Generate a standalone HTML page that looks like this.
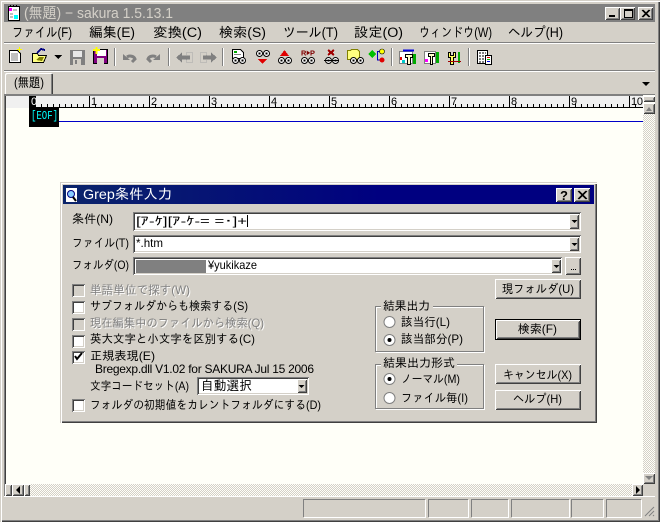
<!DOCTYPE html>
<html lang="ja"><head><meta charset="utf-8"><title>sakura</title>
<style>
html,body{margin:0;padding:0;background:#d4d0c8}
#w{position:relative;width:660px;height:522px;overflow:hidden;background:#d4d0c8}
#w div{position:absolute;box-sizing:border-box}
.rs{background:#d4d0c8;box-shadow:inset 1px 1px 0 #fff,inset -1px -1px 0 #404040,inset 2px 2px 0 #d4d0c8,inset -2px -2px 0 #808080}
.sk{background:#fff;box-shadow:inset 1px 1px 0 #808080,inset -1px -1px 0 #fff,inset 2px 2px 0 #404040,inset -2px -2px 0 #d4d0c8}
.ck{width:13px;height:13px}
.dis{background:#d4d0c8}
.grp{border:1px solid #808080;box-shadow:1px 1px 0 #fff,inset 1px 1px 0 #fff}
.st{box-shadow:inset 1px 1px 0 #808080,1px 1px 0 #fff}
.dith{background-image:conic-gradient(#d4d0c8 25%,#fffff8 0 50%,#d4d0c8 0 75%,#fffff8 0);background-size:2px 2px}
svg{position:absolute;left:0;top:0}
text{font-family:"Liberation Sans","IPAGothic","Noto Sans CJK JP",sans-serif;font-size:12px;fill:#000;white-space:pre}
.m{font-size:13.500px}
.dot{background-image:conic-gradient(#d4d0c8 25%,#fff 0 50%,#d4d0c8 0 75%,#fff 0);background-size:2px 2px}
</style></head><body><div id="w">
<!-- window frame -->
<div style="left:0;top:0;width:660px;height:522px;box-shadow:inset 1px 1px 0 #d4d0c8,inset 2px 2px 0 #fff,inset -1px -1px 0 #404040,inset -2px -2px 0 #808080"></div>
<div style="left:4px;top:4px;width:651px;height:18px;background:#808080"></div>
<div class="rs" style="left:605px;top:7px;width:15px;height:13px"></div>
<div class="rs" style="left:620px;top:7px;width:15px;height:13px"></div>
<div class="rs" style="left:638px;top:7px;width:15px;height:13px"></div>
<div style="left:4px;top:42px;width:651px;height:1px;background:#808080;box-shadow:0 1px 0 #fff"></div>
<div style="left:4px;top:70px;width:651px;height:1px;background:#808080;box-shadow:0 1px 0 #fff"></div>
<!-- separators -->
<div style="left:114px;top:48px;width:1px;height:18px;background:#808080;box-shadow:1px 0 0 #fff"></div>
<div style="left:168px;top:48px;width:1px;height:18px;background:#808080;box-shadow:1px 0 0 #fff"></div>
<div style="left:222px;top:48px;width:1px;height:18px;background:#808080;box-shadow:1px 0 0 #fff"></div>
<div style="left:391px;top:48px;width:1px;height:18px;background:#808080;box-shadow:1px 0 0 #fff"></div>
<div style="left:468px;top:48px;width:1px;height:18px;background:#808080;box-shadow:1px 0 0 #fff"></div>
<!-- tab -->
<div style="left:5px;top:73px;width:48px;height:22px;background:#d4d0c8;box-shadow:inset 1px 1px 0 #fff,inset -1px 0 0 #404040,inset -2px 0 0 #808080;border-radius:2px 2px 0 0"></div>
<!-- editor -->
<div style="left:4px;top:94px;width:651px;height:403px;background:#fffff8;box-shadow:inset 1px 1px 0 #808080,inset 2px 0 0 #404040,inset 0 -1px 0 #fff"></div>
<div style="left:5px;top:95px;width:638px;height:1px;background:#808080"></div>
<div style="left:6px;top:96px;width:637px;height:12px;background:#f0f0f0"></div>
<div style="left:29px;top:107px;width:614px;height:1px;background:#000"></div>
<div style="left:29px;top:121px;width:614px;height:1px;background:#0000c8"></div>
<div style="left:29px;top:108px;width:30px;height:19px;background:#000"></div>
<div style="left:30px;top:96px;width:6px;height:11px;background:#000"></div>
<!-- scrollbars -->
<div class="dith" style="left:643px;top:114px;width:12px;height:359px"></div>
<div class="rs" style="left:643px;top:96px;width:12px;height:6px"></div>
<div class="rs" style="left:643px;top:103px;width:12px;height:11px"></div>
<div class="rs" style="left:643px;top:473px;width:12px;height:11px"></div>
<div style="left:643px;top:484px;width:12px;height:12px;background:#d4d0c8"></div>
<div class="dith" style="left:30px;top:484px;width:602px;height:12px"></div>
<div class="rs" style="left:5px;top:484px;width:7px;height:12px"></div>
<div class="rs" style="left:12px;top:484px;width:12px;height:12px"></div>
<div class="rs" style="left:24px;top:484px;width:6px;height:12px"></div>
<div class="rs" style="left:632px;top:484px;width:11px;height:12px"></div>
<!-- status -->
<div style="left:4px;top:496px;width:651px;height:1px;background:#fff"></div>
<div class="st" style="left:303px;top:499px;width:122px;height:18px"></div>
<div class="st" style="left:428px;top:499px;width:40px;height:18px"></div>
<div class="st" style="left:471px;top:499px;width:37px;height:18px"></div>
<div class="st" style="left:511px;top:499px;width:58px;height:18px"></div>
<div class="st" style="left:571px;top:499px;width:32px;height:18px"></div>
<div class="st" style="left:606px;top:499px;width:35px;height:18px"></div>
<!-- dialog -->
<div style="left:60px;top:182px;width:537px;height:241px;background:#d4d0c8;box-shadow:inset 1px 1px 0 #d4d0c8,inset 2px 2px 0 #fff,inset -1px -1px 0 #404040,inset -2px -2px 0 #808080"></div>
<div style="left:63px;top:185px;width:531px;height:19px;background:linear-gradient(90deg,#0a246a,#000080 60%)"></div>
<div class="rs" style="left:556px;top:188px;width:16px;height:14px"></div>
<div class="rs" style="left:574px;top:188px;width:16px;height:14px"></div>
<div class="sk" style="left:133px;top:212px;width:448px;height:19px"></div>
<div class="rs" style="left:569px;top:214px;width:10px;height:15px"></div>
<div class="sk" style="left:133px;top:235px;width:448px;height:18px"></div>
<div class="rs" style="left:569px;top:237px;width:10px;height:14px"></div>
<div class="sk" style="left:133px;top:257px;width:429px;height:18px"></div>
<div class="rs" style="left:551px;top:259px;width:10px;height:14px"></div>
<div style="left:136px;top:260px;width:70px;height:13px;background:#808080"></div>
<div class="rs" style="left:565px;top:257px;width:16px;height:18px"></div>
<div class="rs" style="left:495px;top:279px;width:86px;height:20px"></div>
<div class="sk ck dis" style="left:72px;top:284px"></div>
<div class="sk ck" style="left:72px;top:301px"></div>
<div class="sk ck dis" style="left:72px;top:318px"></div>
<div class="sk ck" style="left:72px;top:335px"></div>
<div class="sk ck" style="left:72px;top:351px"></div>
<div class="sk ck" style="left:72px;top:399px"></div>
<div class="sk" style="left:197px;top:377px;width:112px;height:18px"></div>
<div class="rs" style="left:297px;top:379px;width:10px;height:14px"></div>
<div class="grp" style="left:375px;top:306px;width:109px;height:46px"></div>
<div class="grp" style="left:375px;top:364px;width:109px;height:45px"></div>
<div style="left:381px;top:300px;width:52px;height:12px;background:#d4d0c8"></div>
<div style="left:381px;top:358px;width:76px;height:12px;background:#d4d0c8"></div>
<div style="left:495px;top:319px;width:86px;height:21px;background:#000"></div>
<div class="rs" style="left:496px;top:320px;width:84px;height:19px"></div>
<div class="rs" style="left:495px;top:364px;width:86px;height:20px"></div>
<div class="rs" style="left:495px;top:390px;width:86px;height:20px"></div>

<svg width="660" height="522" viewBox="0 0 660 522">
<defs>
<g id="eyes" shape-rendering="geometricPrecision"><circle cx="3.500" cy="3.500" r="3" fill="#fff" stroke="#000"/><circle cx="10.500" cy="3.500" r="3" fill="#fff" stroke="#000"/><rect x="2.500" y="2.500" width="2" height="2"/><rect x="9.500" y="2.500" width="2" height="2"/></g>
</defs>
<!-- title -->
<rect x="8.500" y="6.500" width="11" height="14" fill="#fff" stroke="#000"/><path d="M10.500 6v-1M13.500 6v-1M16.500 6v-1" stroke="#000"/><rect x="9" y="8" width="3" height="3" fill="#f0f"/><rect x="14" y="15" width="4" height="4" fill="#0ff"/><path d="M13 10h4M10 14h3M10 17h3" stroke="#808080"/>
<text x="24" y="18" style="font-size:15px;fill:#d4d0c8" textLength="149" lengthAdjust="spacingAndGlyphs">(無題) − sakura 1.5.13.1</text>
<rect x="609" y="15" width="6" height="2"/>
<rect x="624.500" y="9.500" width="8" height="8" fill="none" stroke="#000"/><rect x="624" y="9" width="9" height="2"/>
<path d="M642 10l7 7M643 10l7 7M649 10l-7 7M650 10l-7 7" stroke="#000"/>
<!-- menu -->
<text class="m" x="12" y="37" textLength="60" lengthAdjust="spacingAndGlyphs">ファイル(F)</text>
<text class="m" x="89" y="37" textLength="46" lengthAdjust="spacingAndGlyphs">編集(E)</text>
<text class="m" x="153" y="37" textLength="49" lengthAdjust="spacingAndGlyphs">変換(C)</text>
<text class="m" x="219" y="37" textLength="47" lengthAdjust="spacingAndGlyphs">検索(S)</text>
<text class="m" x="283" y="37" textLength="55" lengthAdjust="spacingAndGlyphs">ツール(T)</text>
<text class="m" x="354" y="37" textLength="49" lengthAdjust="spacingAndGlyphs">設定(O)</text>
<text class="m" x="419" y="37" textLength="73" lengthAdjust="spacingAndGlyphs">ウィンドウ(W)</text>
<text class="m" x="508" y="37" textLength="55" lengthAdjust="spacingAndGlyphs">ヘルプ(H)</text>
<!-- toolbar -->
<g shape-rendering="crispEdges">
<path d="M9.500 50.500h8l3 3v9h-11z" fill="#fff" stroke="#000"/><path d="M11 54h7M11 56h7M11 58h7M11 60h7" stroke="#808080"/><path d="M19.500 47v5M17 49.500h5" stroke="#ff0"/>
<path d="M32.500 53.500h5l1 2h8l-3 7h-11z" fill="#ffff80" stroke="#000"/><path d="M37 53l4-4 4 1" fill="none" stroke="#000080" stroke-width="2"/><path d="M36 60l3-3h5l-2 4z" fill="#808000"/>
<path d="M54 55h8l-4 4z"/>
<rect x="70" y="50" width="15" height="15" fill="#808080"/><rect x="73" y="51" width="9" height="6" fill="#e8e8e8"/><rect x="73" y="59" width="8" height="6" fill="#d4d0c8"/><rect x="75" y="60" width="2" height="4" fill="#808080"/>
<rect x="93.500" y="49.500" width="14" height="14" fill="#800080" stroke="#000"/><rect x="97" y="50" width="9" height="6" fill="#fff"/><rect x="97" y="58" width="7" height="6" fill="#d4d0c8"/><path d="M93 50h7M96.500 47v7" stroke="#ff0" stroke-width="2"/>
</g>
<path d="M127 57a5 4 0 0 1 8 2l-3 3" fill="none" stroke="#808080" stroke-width="3"/><path d="M123 54l7 6h-7z" fill="#808080"/>
<path d="M156 57a5 4 0 0 0-8 2l3 3" fill="none" stroke="#808080" stroke-width="3"/><path d="M160 54l-7 6h7z" fill="#808080"/>
<g shape-rendering="crispEdges">
<rect x="186.500" y="52.500" width="6" height="10" fill="none" stroke="#a8a8a8" stroke-dasharray="1"/><path d="M176 57.500l6-5v3h8v4h-8v3z" fill="#808080"/>
<rect x="200.500" y="52.500" width="6" height="10" fill="none" stroke="#a8a8a8" stroke-dasharray="1"/><path d="M217 57.500l-6-5v3h-8v4h8v3z" fill="#808080"/>
<!-- search icons -->
<path d="M232.500 49.500h8l3 3v6h-11z" fill="#fff" stroke="#000"/><rect x="234" y="51" width="3" height="2" fill="#0a0"/><rect x="234" y="54" width="7" height="1" fill="#808080"/><use href="#eyes" x="232" y="57"/>
<use href="#eyes" x="256" y="50"/><path d="M258 59h9l-4.500 5z" fill="#e00000"/>
<path d="M280 56l4.500-6 4.500 6z" fill="#e00000"/><use href="#eyes" x="278" y="57"/>
</g>
<text x="301" y="55.500" style="font-size:7px;font-weight:bold;fill:#800000" textLength="14" lengthAdjust="spacingAndGlyphs">R▶P</text>
<g shape-rendering="crispEdges">
<use href="#eyes" x="301" y="57"/>
<path d="M328 50l6 5M334 50l-6 5" stroke="#a00000" stroke-width="2"/><use href="#eyes" x="325" y="57"/><path d="M324 60.500h15" stroke="#000"/>
<path d="M347.500 50.500h3l1-1h6l2 2v8h-12z" fill="#ffff80" stroke="#808000"/><use href="#eyes" x="350" y="57"/>
<path d="M368 54l4-4 4 4-4 4z" fill="#00c000"/><path d="M377.500 51.500h3M377.500 51v9h3" fill="none" stroke="#0000c0"/>
</g>
<circle cx="382" cy="51.500" r="2.500" fill="#ff0" stroke="#000" stroke-width=".6"/><circle cx="382" cy="60" r="2.500" fill="#e00000"/>
<g shape-rendering="crispEdges">
<!-- tool icons -->
<rect x="399.500" y="51.500" width="13" height="12" fill="#fff" stroke="#808080"/><path d="M403 50.500h11" stroke="#0000e0" stroke-width="2"/><rect x="400" y="57" width="2" height="3" fill="#e00000"/><rect x="402" y="60" width="3" height="3" fill="#0cc"/><path d="M405.500 54.500h7v3h-2v7h-3v-7h-2z" fill="#ffc" stroke="#000"/><rect x="413" y="54" width="3" height="10" fill="#0a0"/>
<rect x="424.500" y="51.500" width="11" height="12" fill="#fff" stroke="#808080"/><rect x="425" y="59" width="3" height="3" fill="#f0f"/><path d="M428.500 53.500h6v3h-2v8h-2v-8h-2z" fill="#ffc" stroke="#000"/><rect x="436" y="52" width="3" height="11" fill="#0a0"/>
<path d="M448.500 52.500h2v3h3v-3h2v5h-2v7h-3v-7h-2z" fill="#ffff60" stroke="#000"/><rect x="458" y="52" width="2" height="11" fill="#0a0"/><path d="M448 61.500h13" stroke="#a00000"/>
<rect x="477.500" y="50.500" width="10" height="13" fill="#fff" stroke="#000"/><rect x="485.500" y="55.500" width="6" height="9" fill="#fff" stroke="#000"/><path d="M479 53h7M479 56h5M479 59h5M479 62h5" stroke="#000" stroke-dasharray="2 1"/><path d="M487 57.500h3" stroke="#e00000"/><path d="M487 59.500h3" stroke="#00c000"/><path d="M487 61.500h3" stroke="#0000e0"/>
</g>
<text x="14" y="87" style="font-size:13px" textLength="30" lengthAdjust="spacingAndGlyphs">(無題)</text>
<path d="M642 82h8l-4 4z"/>
<!-- ruler -->
<path d="M29.500 96v11M89.500 96v11M149.500 96v11M209.500 96v11M269.500 96v11M329.500 96v11M389.500 96v11M449.500 96v11M509.500 96v11M569.500 96v11M629.500 96v11
M41.500 104v3M47.500 104v3M53.500 104v3M59.500 104v3M65.500 104v3M71.500 104v3M77.500 104v3M83.500 104v3
M95.500 104v3M101.500 104v3M107.500 104v3M113.500 104v3M119.500 104v3M125.500 104v3M131.500 104v3M137.500 104v3M143.500 104v3
M155.500 104v3M161.500 104v3M167.500 104v3M173.500 104v3M179.500 104v3M185.500 104v3M191.500 104v3M197.500 104v3M203.500 104v3
M215.500 104v3M221.500 104v3M227.500 104v3M233.500 104v3M239.500 104v3M245.500 104v3M251.500 104v3M257.500 104v3M263.500 104v3
M275.500 104v3M281.500 104v3M287.500 104v3M293.500 104v3M299.500 104v3M305.500 104v3M311.500 104v3M317.500 104v3M323.500 104v3
M335.500 104v3M341.500 104v3M347.500 104v3M353.500 104v3M359.500 104v3M365.500 104v3M371.500 104v3M377.500 104v3M383.500 104v3
M395.500 104v3M401.500 104v3M407.500 104v3M413.500 104v3M419.500 104v3M425.500 104v3M431.500 104v3M437.500 104v3M443.500 104v3
M455.500 104v3M461.500 104v3M467.500 104v3M473.500 104v3M479.500 104v3M485.500 104v3M491.500 104v3M497.500 104v3M503.500 104v3
M515.500 104v3M521.500 104v3M527.500 104v3M533.500 104v3M539.500 104v3M545.500 104v3M551.500 104v3M557.500 104v3M563.500 104v3
M575.500 104v3M581.500 104v3M587.500 104v3M593.500 104v3M599.500 104v3M605.500 104v3M611.500 104v3M617.500 104v3M623.500 104v3M635.500 104v3" stroke="#000" fill="none" shape-rendering="crispEdges"/>
<text x="31" y="105" style="font-size:11px;fill:#fff">0</text><text x="91" y="105" style="font-size:11px">1</text><text x="151" y="105" style="font-size:11px">2</text><text x="211" y="105" style="font-size:11px">3</text><text x="271" y="105" style="font-size:11px">4</text><text x="331" y="105" style="font-size:11px">5</text><text x="391" y="105" style="font-size:11px">6</text><text x="451" y="105" style="font-size:11px">7</text><text x="511" y="105" style="font-size:11px">8</text><text x="571" y="105" style="font-size:11px">9</text><text x="631" y="105" style="font-size:11px" textLength="12">10</text>
<text x="31" y="119" style="font-family:'Liberation Mono',monospace;font-size:12px;fill:#00ffff" textLength="27" lengthAdjust="spacingAndGlyphs">[EOF]</text>
<!-- scroll arrows -->
<path d="M646 111l3-4 3 4z" fill="#808080"/><path d="M645 476h8l-4 4z" fill="#808080"/>
<path d="M20 486v8l-4-4z"/><path d="M636 486v8l4-4z"/>
<path d="M645 516l9-9M649 516l5-5M653 516l1-1" stroke="#808080" fill="none"/>
<!-- dialog -->
<rect x="66" y="188" width="11" height="14" fill="#fff"/><circle cx="71" cy="194" r="3.500" fill="#8cf" stroke="#000080"/><path d="M73 197l3 4" stroke="#000" stroke-width="2"/>
<text x="83" y="199" style="font-size:14px;fill:#fff" textLength="89" lengthAdjust="spacingAndGlyphs">Grep条件入力</text>
<text x="560" y="200" style="font-size:13px;font-weight:bold">?</text>
<path d="M578 191l8 8M579 191l8 8M586 191l-8 8M587 191l-8 8" stroke="#000" fill="none"/>
<text x="72" y="223" textLength="41" lengthAdjust="spacingAndGlyphs">条件(N)</text>
<text x="72" y="247" textLength="57" lengthAdjust="spacingAndGlyphs">ファイル(T)</text>
<text x="72" y="269" textLength="57" lengthAdjust="spacingAndGlyphs">フォルダ(O)</text>
<text x="136" y="225" style="font-size:12px" textLength="111" lengthAdjust="spacingAndGlyphs">[ｱ-ｹ][ｱ-ｹ-= =･]+</text>
<path d="M247.500 215v12" stroke="#000"/>
<text x="136" y="247" textLength="27" lengthAdjust="spacingAndGlyphs">*.htm</text>
<text x="208" y="269" textLength="49" lengthAdjust="spacingAndGlyphs">¥yukikaze</text>
<path d="M571.500 220h6l-3 3zM571.500 243h6l-3 3zM553.500 265h6l-3 3zM298.500 385h6l-3 3z"/>
<path d="M571 269.500h1M573 269.500h1M575 269.500h1" stroke="#000" fill="none"/>
<text x="502" y="293" textLength="72" lengthAdjust="spacingAndGlyphs">現フォルダ(U)</text>
<text x="91" y="295" style="fill:#fff" textLength="100" lengthAdjust="spacingAndGlyphs">単語単位で探す(W)</text><text x="90" y="294" style="fill:#808080" textLength="100" lengthAdjust="spacingAndGlyphs">単語単位で探す(W)</text>
<text x="91" y="328" style="fill:#fff" textLength="174" lengthAdjust="spacingAndGlyphs">現在編集中のファイルから検索(Q)</text><text x="90" y="327" style="fill:#808080" textLength="174" lengthAdjust="spacingAndGlyphs">現在編集中のファイルから検索(Q)</text>
<text x="90" y="310" textLength="158" lengthAdjust="spacingAndGlyphs">サブフォルダからも検索する(S)</text>
<text x="90" y="343" textLength="165" lengthAdjust="spacingAndGlyphs">英大文字と小文字を区別する(C)</text>
<text x="90" y="360" textLength="65" lengthAdjust="spacingAndGlyphs">正規表現(E)</text>
<path d="M75 356l2 3 5-6" fill="none" stroke="#000" stroke-width="2"/>
<text x="95" y="373" textLength="219">Bregexp.dll V1.02 for SAKURA Jul 15 2006</text>
<text x="90" y="390" textLength="99" lengthAdjust="spacingAndGlyphs">文字コードセット(A)</text>
<text x="201" y="390" style="font-size:13px" textLength="51" lengthAdjust="spacingAndGlyphs">自動選択</text>
<text x="90" y="409" textLength="231" lengthAdjust="spacingAndGlyphs">フォルダの初期値をカレントフォルダにする(D)</text>
<text x="383" y="310" textLength="47" lengthAdjust="spacingAndGlyphs">結果出力</text>
<text x="383" y="367" textLength="72" lengthAdjust="spacingAndGlyphs">結果出力形式</text>
<g fill="#fff" stroke="#808080">
<circle cx="389.500" cy="322" r="5.500"/><circle cx="389.500" cy="340" r="5.500"/><circle cx="389.500" cy="379" r="5.500"/><circle cx="389.500" cy="398" r="5.500"/>
</g>
<circle cx="389.500" cy="340" r="2"/><circle cx="389.500" cy="379" r="2"/>
<text x="401" y="326" textLength="49" lengthAdjust="spacingAndGlyphs">該当行(L)</text>
<text x="401" y="343" textLength="62" lengthAdjust="spacingAndGlyphs">該当部分(P)</text>
<text x="401" y="383" textLength="59" lengthAdjust="spacingAndGlyphs">ノーマル(M)</text>
<text x="401" y="402" textLength="67" lengthAdjust="spacingAndGlyphs">ファイル毎(I)</text>
<text x="518" y="333" textLength="39" lengthAdjust="spacingAndGlyphs">検索(F)</text>
<text x="503" y="379" textLength="69" lengthAdjust="spacingAndGlyphs">キャンセル(X)</text>
<text x="513" y="403" textLength="49" lengthAdjust="spacingAndGlyphs">ヘルプ(H)</text>
</svg>
</div></body></html>
